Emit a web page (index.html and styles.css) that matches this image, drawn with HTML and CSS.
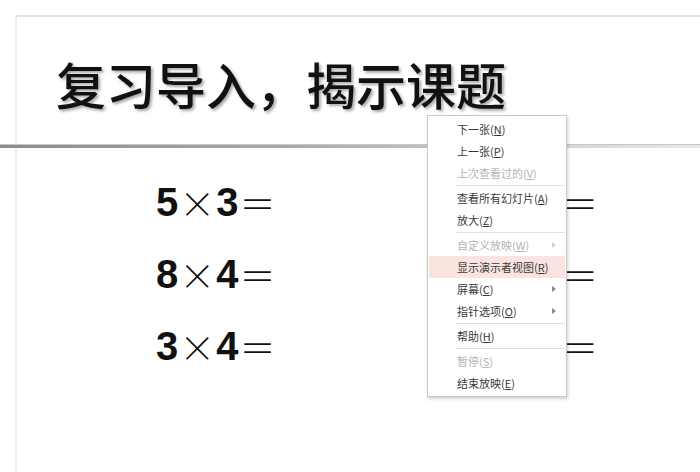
FILE: index.html
```html
<!DOCTYPE html>
<html lang="zh-CN">
<head>
<meta charset="utf-8">
<title>复习导入，揭示课题</title>
<link rel="stylesheet" href="styles.css">
</head>
<body>
<div class="stage">
  <div class="slide">
    <h1 class="title">复习导入，揭示课题</h1>
  </div>
  <div class="rule"></div>
  <div class="slide-body">
    <div class="eqs">
      <div class="eq"><span class="n">5</span><span class="op">×</span><span class="n">3</span><span class="op">＝</span></div>
      <div class="eq r"><span class="op">＝</span></div>
      <div class="eq"><span class="n">8</span><span class="op">×</span><span class="n">4</span><span class="op">＝</span></div>
      <div class="eq r"><span class="op">＝</span></div>
      <div class="eq"><span class="n">3</span><span class="op">×</span><span class="n">4</span><span class="op">＝</span></div>
      <div class="eq r"><span class="op">＝</span></div>
    </div>
  </div>
  <ul class="menu">
    <li class="item">下一张(<u>N</u>)</li>
    <li class="item">上一张(<u>P</u>)</li>
    <li class="item off">上次查看过的(<u>V</u>)</li>
    <li class="sep"></li>
    <li class="item">查看所有幻灯片(<u>A</u>)</li>
    <li class="item">放大(<u>Z</u>)</li>
    <li class="sep"></li>
    <li class="item off sub">自定义放映(<u>W</u>)</li>
    <li class="item hot">显示演示者视图(<u>R</u>)</li>
    <li class="item sub">屏幕(<u>C</u>)</li>
    <li class="item sub">指针选项(<u>O</u>)</li>
    <li class="sep"></li>
    <li class="item">帮助(<u>H</u>)</li>
    <li class="sep"></li>
    <li class="item off">暂停(<u>S</u>)</li>
    <li class="item">结束放映(<u>E</u>)</li>
  </ul>
</div>
</body>
</html>
```

FILE: styles.css
```css
* { box-sizing: border-box; }
html, body {
  margin: 0;
  padding: 0;
  width: 700px;
  height: 472px;
  overflow: hidden;
  background: #ffffff;
}
.stage {
  position: relative;
  width: 700px;
  height: 472px;
  padding-top: 15px;
}
.slide {
  margin-left: 15px;
  height: 129px;
  border-top: 2px solid #e2e2e2;
  border-left: 2px solid #ececec;
  background: #fff;
  padding: 36px 0 0 39px;
}
.title {
  margin: 0;
  font-family: "Noto Sans CJK SC", sans-serif;
  font-weight: 500;
  font-size: 50px;
  line-height: 60px;
  letter-spacing: 0;
  color: #111;
  text-shadow: 2px 2px 3px rgba(0,0,0,0.35);
}
.rule {
  height: 4px;
  background: linear-gradient(to right, #8c8c8c 0%, #a8a8a8 40%, #d0d0d0 75%, #e8e8e8 100%);
  border-top: 1px solid #c8c8c8;
}
.slide-body {
  margin-left: 15px;
  height: 330px;
  border-left: 2px solid #ececec;
  padding: 30px 0 0 139px;
}
.eqs {
  display: grid;
  grid-template-columns: 405px auto;
  row-gap: 24px;
}
.eq {
  font-family: "Liberation Sans", Arial, sans-serif;
  font-size: 40px;
  line-height: 48px;
  color: #111;
  display: flex;
  align-items: center;
}
.eq .n { font-weight: bold; }
.eq .op {
  font-family: "Noto Sans CJK SC", sans-serif;
  font-weight: 300;
  font-size: 36px;
  margin: 0 1px;
}
.menu {
  position: absolute;
  left: 427px;
  top: 115px;
  width: 140px;
  margin: 0;
  padding: 2px 1px;
  list-style: none;
  background: #fff;
  border: 1px solid #c9c9c9;
  box-shadow: 1px 2px 3px rgba(0,0,0,0.18);
  font-family: "Noto Sans CJK SC", sans-serif;
  font-size: 11px;
  color: #3a3a3a;
}
.item {
  position: relative;
  height: 22px;
  line-height: 22px;
  padding-left: 28px;
  white-space: nowrap;
}
.item u { text-decoration-thickness: 1px; text-underline-offset: 1px; }
.item.off { color: #b4b4b4; }
.item.hot { background: #fbe3df; }
.item.sub::after {
  content: "";
  position: absolute;
  right: 9px;
  top: 8px;
  border-left: 4px solid #8a8a8a;
  border-top: 3px solid transparent;
  border-bottom: 3px solid transparent;
}
.item.off.sub::after { border-left-color: #cfcfcf; }
.sep {
  height: 1px;
  margin: 1px 0 1px 27px;
  background: #e2e2e2;
}
```
